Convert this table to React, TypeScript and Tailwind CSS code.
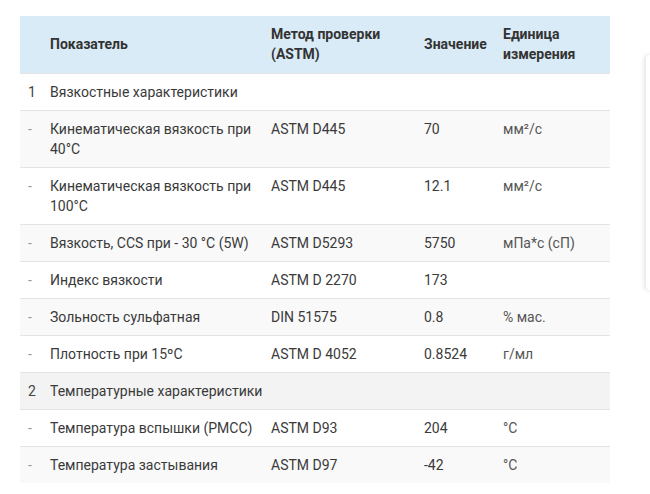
import React from 'react';

type Row = { n: string; name: string; method?: string; value?: string; unit?: string; group?: boolean };

const rows: Row[] = [
  { n: '1', name: 'Вязкостные характеристики', group: true },
  { n: '-', name: 'Кинематическая вязкость при 40°C', method: 'ASTM D445', value: '70', unit: 'мм²/с' },
  { n: '-', name: 'Кинематическая вязкость при 100°C', method: 'ASTM D445', value: '12.1', unit: 'мм²/с' },
  { n: '-', name: 'Вязкость, CCS при - 30 °C (5W)', method: 'ASTM D5293', value: '5750', unit: 'мПа*с (сП)' },
  { n: '-', name: 'Индекс вязкости', method: 'ASTM D 2270', value: '173', unit: '' },
  { n: '-', name: 'Зольность сульфатная', method: 'DIN 51575', value: '0.8', unit: '% мас.' },
  { n: '-', name: 'Плотность при 15ºC', method: 'ASTM D 4052', value: '0.8524', unit: 'г/мл' },
  { n: '2', name: 'Температурные характеристики', group: true },
  { n: '-', name: 'Температура вспышки (PMCC)', method: 'ASTM D93', value: '204', unit: '°C' },
  { n: '-', name: 'Температура застывания', method: 'ASTM D97', value: '-42', unit: '°C' },
];

const App = () => {
  return (
    <div className="w-[650px] h-[494px] bg-white overflow-hidden flex pt-4 pl-5 font-['Roboto','Liberation_Sans',sans-serif] text-[14px] leading-5 text-[#3a3a3a]">
      <table className="table-fixed border-collapse w-[590px] shrink-0 self-start">
        <colgroup>
          <col className="w-[22px]" />
          <col className="w-[221px]" />
          <col className="w-[153px]" />
          <col className="w-[79px]" />
          <col className="w-[115px]" />
        </colgroup>
        <thead>
          <tr className="bg-[#d9ebf6] font-bold text-[#333]">
            <th className="pl-2 pt-2 pb-[9px] text-left"></th>
            <th className="pl-2 pr-1 pt-2 pb-[9px] text-left align-middle">Показатель</th>
            <th className="pl-2 pr-1 pt-2 pb-[9px] text-left">Метод проверки (ASTM)</th>
            <th className="pl-2 pt-2 pb-[9px] text-left whitespace-nowrap">Значение</th>
            <th className="pl-2 pr-1 pt-2 pb-[9px] text-left">Единица измерения</th>
          </tr>
        </thead>
        <tbody>
          {rows.map((r, i) => (
            <tr
              key={i}
              className={`border-t border-[#e4e4e4] ${i % 2 === 1 ? (r.group ? 'bg-[#f3f3f3]' : 'bg-[#f9f9f9]') : 'bg-white'}`}
            >
              <td className={`pl-2 py-2 align-top ${r.group ? 'text-[#444]' : 'text-[#999]'}`}>{r.n}</td>
              <td className="pl-2 pr-1 py-2 align-top" colSpan={r.group ? 4 : 1}>{r.name}</td>
              {!r.group && (
                <>
                  <td className="pl-2 pr-1 py-2 align-top">{r.method}</td>
                  <td className="pl-2 pr-1 py-2 align-top">{r.value}</td>
                  <td className="pl-2 pr-1 py-2 align-top text-[#555]">{r.unit}</td>
                </>
              )}
            </tr>
          ))}
        </tbody>
      </table>
      <div className="ml-[35px] mt-[39px] w-[60px] h-[235px] shrink-0 bg-white rounded-sm shadow-[-1px_0_4px_rgba(0,0,0,0.1)] border-l border-[#ececec]"></div>
    </div>
  );
};

export default App;
